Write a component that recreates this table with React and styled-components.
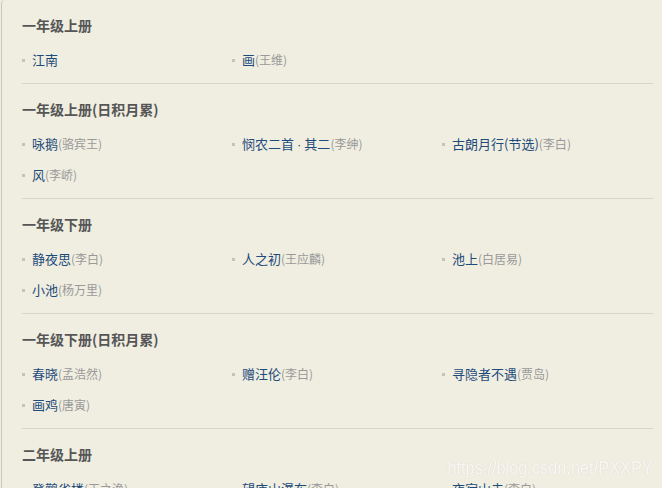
import React from "react";
import styled, { createGlobalStyle } from "styled-components";

const Global = createGlobalStyle`
  html, body { margin: 0; padding: 0; background: #f0eee1; }
  body { font-family: "Noto Sans CJK SC", "Liberation Sans", sans-serif; }
`;

const Card = styled.div`
  margin-left: 1px;
  border-left: 1px solid #cbc8b3;
  border-top-left-radius: 4px;
  background: #f0eee1;
  padding: 0 9px 0 20px;
`;

const Section = styled.section`
  padding: 16px 0 8px;
  border-bottom: 1px solid #d9d6c7;
`;

const Title = styled.h3`
  margin: 0 0 10px;
  font-size: 14px;
  line-height: 18px;
  font-weight: bold;
  color: #565656;
`;

const List = styled.ul`
  margin: 0;
  padding: 0;
  list-style: none;
  display: grid;
  grid-template-columns: repeat(3, 210px);
`;

const Item = styled.li`
  display: flex;
  align-items: center;
  height: 31px;
  white-space: nowrap;
`;

const Bullet = styled.span`
  width: 3px;
  height: 3px;
  background: #c6c3b5;
  margin: 1px 7px 0 0;
  flex: none;
`;

const Poem = styled.a`
  font-size: 13px;
  color: #1d4b7a;
  text-decoration: none;
`;

const Dot = styled.span`
  font-family: "Liberation Sans", sans-serif;
  padding: 0 3px;
`;

const Author = styled.span`
  font-size: 12px;
  color: #999;
`;

const Watermark = styled.div`
  position: fixed;
  right: 9px;
  top: 455px;
  font-family: "Liberation Sans", Arial, sans-serif;
  font-size: 19px;
  line-height: 26px;
  color: rgba(255, 255, 255, 0.85);
  text-shadow: 0 0 1px rgba(180, 176, 160, 0.6);
  transform: scaleX(0.86);
  transform-origin: right center;
  pointer-events: none;
  white-space: nowrap;
`;

const data = [
  { title: "一年级上册", items: [["江南", ""], ["画", "王维"]] },
  {
    title: "一年级上册(日积月累)",
    items: [["咏鹅", "骆宾王"], ["悯农二首·其二", "李绅"], ["古朗月行(节选)", "李白"], ["风", "李峤"]],
  },
  {
    title: "一年级下册",
    items: [["静夜思", "李白"], ["人之初", "王应麟"], ["池上", "白居易"], ["小池", "杨万里"]],
  },
  {
    title: "一年级下册(日积月累)",
    items: [["春晓", "孟浩然"], ["赠汪伦", "李白"], ["寻隐者不遇", "贾岛"], ["画鸡", "唐寅"]],
  },
  {
    title: "二年级上册",
    items: [["登鹳雀楼", "王之涣"], ["望庐山瀑布", "李白"], ["夜宿山寺", "李白"], ["敕勒歌", "北朝民歌"]],
  },
];

function PoemName({ name }) {
  const parts = name.split("·");
  return parts.map((p, i) => (
    <React.Fragment key={i}>
      {i > 0 && <Dot>·</Dot>}
      {p}
    </React.Fragment>
  ));
}

export default function App() {
  return (
    <>
      <Global />
      <Card>
        {data.map((s) => (
          <Section key={s.title}>
            <Title>{s.title}</Title>
            <List>
              {s.items.map(([p, a]) => (
                <Item key={p}>
                  <Bullet />
                  <Poem href="#">
                    <PoemName name={p} />
                  </Poem>
                  {a && <Author>({a})</Author>}
                </Item>
              ))}
            </List>
          </Section>
        ))}
      </Card>
      <Watermark>https://blog.csdn.net/PXXPY</Watermark>
    </>
  );
}
